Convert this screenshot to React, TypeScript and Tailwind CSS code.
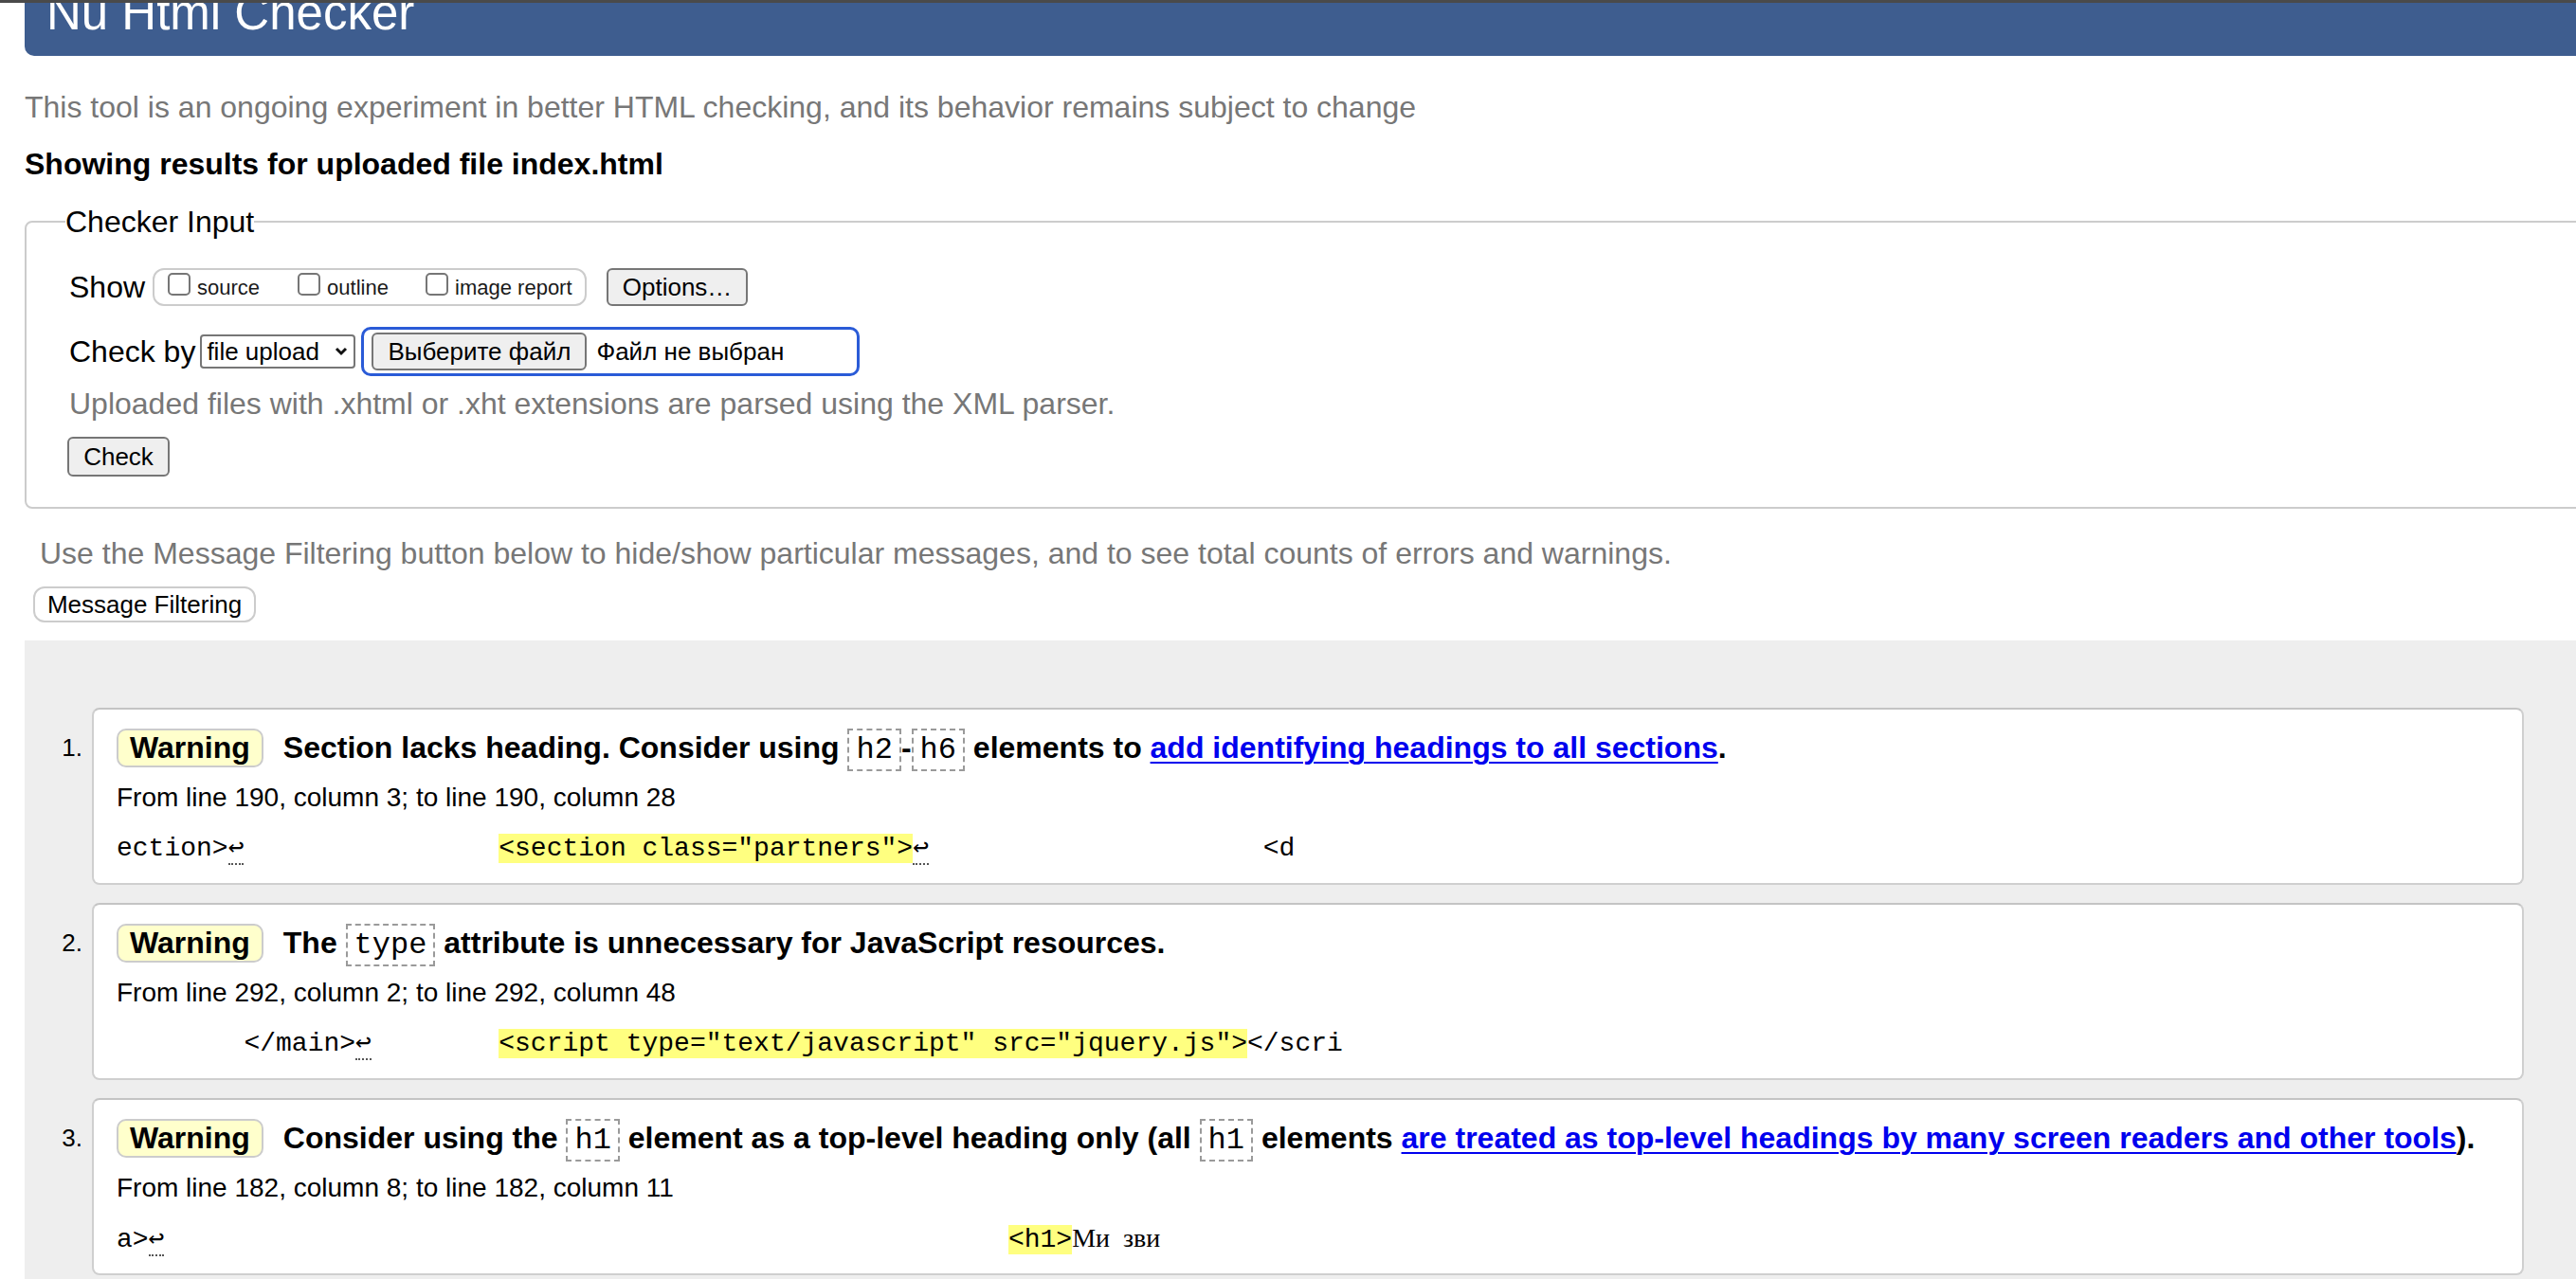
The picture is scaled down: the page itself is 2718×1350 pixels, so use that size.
import React from 'react';

const Code: React.FC<{ children: React.ReactNode }> = ({ children }) => (
  <span className="inline-block border-2 border-dashed border-[#9a9a9a] px-[7px] align-middle font-['Liberation_Mono',monospace] text-[32px] font-normal leading-[41px]">
    {children}
  </span>
);

const Ret: React.FC = () => (
  <span className="inline-block w-[1ch] border-b-2 border-dotted border-[#555] text-center leading-[30px]">↩</span>
);

const Hl: React.FC<{ children: React.ReactNode }> = ({ children }) => (
  <span className="bg-[#ffff80]">{children}</span>
);

interface MessageProps {
  num: number;
  title: React.ReactNode;
  location: string;
  extract: React.ReactNode;
}

const Message: React.FC<MessageProps> = ({ num, title, location, extract }) => (
  <li className="flex">
    <div className="mt-[17px] flex h-[50px] w-[45px] shrink-0 items-center justify-end pr-[10px] text-[26px]">
      {num}.
    </div>
    <div className="flex-1 rounded-[8px] border-2 border-[#cfcfcf] border-t-[#c4c4c4] bg-white pt-[15px] pb-[16px] pl-[24px]">
      <div className="flex h-[50px] items-center">
        <span className="flex h-[41px] items-center rounded-[10px] border-2 border-[#cccccc] bg-[#ffffcc] px-[12px] text-[32px] font-bold leading-none">
          Warning
        </span>
        <p className="ml-[21px] whitespace-nowrap text-[32px] font-bold leading-[50px]">{title}</p>
      </div>
      <div className="mt-[10px] flex h-[36px] items-center text-[28px]">{location}</div>
      <div className="mt-[16px] flex h-[40px] items-center font-['Liberation_Mono',monospace] text-[28px]">
        <span className="whitespace-pre">{extract}</span>
      </div>
    </div>
  </li>
);

const Link: React.FC<{ children: React.ReactNode }> = ({ children }) => (
  <a href="#" className="text-[#0000ee] underline decoration-2 underline-offset-[4px]">
    {children}
  </a>
);

const Checkbox: React.FC<{ label: string; width?: string }> = ({ label, width }) => (
  <span className={`flex items-center ${width ?? ''}`}>
    <span className="-mt-[6px] h-[24px] w-[24px] rounded-[5px] border-2 border-[#767676] bg-white" />
    <span className="ml-[7px] text-[22px] text-[#1a1a1a]">{label}</span>
  </span>
);

const btn = 'flex items-center justify-center rounded-[6px] border-2 border-[#767676] bg-[#efefef] text-[26px] text-black';

export default function App() {
  return (
    <div className="h-[1350px] w-[2718px] overflow-hidden bg-white font-['Liberation_Sans',Arial,sans-serif] text-black">
      <div className="h-[3px] bg-[#4a4a4a]" />
      <header className="ml-[26px] h-[56px] overflow-hidden rounded-bl-[10px] bg-[#3e5d8f] pl-[23px]">
        <h1 className="-mt-[15px] text-[51px] leading-none text-white">Nu Html Checker</h1>
      </header>

      <p className="ml-[26px] mt-[34px] text-[32px] leading-[40px] text-[#777]">
        This tool is an ongoing experiment in better HTML checking, and its behavior remains subject to change
      </p>
      <p className="ml-[26px] mt-[20px] text-[32px] font-bold leading-[40px]">Showing results for uploaded file index.html</p>

      {/* Checker input form */}
      <fieldset className="ml-[26px] mt-[21px] w-[2760px] rounded-[8px] border-2 border-[#cccccc] pl-[41px] pb-[32px]">
        <legend className="text-[32px] leading-[40px]">Checker Input</legend>

        <div className="mt-[25px] flex h-[48px] items-center pl-[4px]">
          <span className="text-[32px]">Show</span>
          <div className="ml-[8px] flex h-[40px] w-[458px] items-center rounded-[12px] border-2 border-[#cccccc] pl-[14px]">
            <Checkbox label="source" width="w-[137px]" />
            <Checkbox label="outline" width="w-[135px]" />
            <Checkbox label="image report" />
          </div>
          <button className={`${btn} ml-[21px] h-[40px] w-[149px]`}>Options…</button>
        </div>

        <div className="mt-[18px] flex h-[52px] items-center pl-[4px]">
          <span className="text-[32px]">Check by</span>
          <div className="ml-[5px] flex h-[36px] w-[164px] items-center justify-between rounded-[4px] border-2 border-[#767676] bg-white pl-[5px] pr-[6px] text-[26px]">
            <span>file upload</span>
            <svg width="14" height="10" viewBox="0 0 14 10" fill="none">
              <polyline points="2,2 7,7 12,2" stroke="#111" strokeWidth="3" />
            </svg>
          </div>
          <div className="ml-[6px] flex h-[52px] w-[526px] items-center rounded-[10px] border-[3px] border-[#2a5bd7] pl-[8px]">
            <button className={`${btn} h-[40px] w-[227px]`}>Выберите файл</button>
            <span className="ml-[10px] text-[26px]">Файл не выбран</span>
          </div>
        </div>

        <p className="mt-[9px] pl-[4px] text-[32px] leading-[40px] text-[#777]">
          Uploaded files with .xhtml or .xht extensions are parsed using the XML parser.
        </p>

        <div className="mt-[15px] pl-[2px]">
          <button className={`${btn} h-[42px] w-[108px]`}>Check</button>
        </div>
      </fieldset>

      <p className="ml-[42px] mt-[27px] text-[32px] leading-[40px] text-[#777]">
        Use the Message Filtering button below to hide/show particular messages, and to see total counts of errors and warnings.
      </p>
      <button className="ml-[35px] mt-[15px] flex h-[38px] w-[235px] items-center justify-center rounded-[12px] border-2 border-[#cccccc] bg-white text-[26px]">
        Message Filtering
      </button>

      {/* Results */}
      <div className="ml-[26px] mt-[19px] h-[700px] bg-[#eeeeee] pl-[26px] pr-[55px] pt-[71px]">
        <ol className="flex flex-col gap-[19px]">
          <Message
            num={1}
            title={
              <>
                Section lacks heading. Consider using <Code>h2</Code>-<Code>h6</Code> elements to{' '}
                <Link>add identifying headings to all sections</Link>.
              </>
            }
            location="From line 190, column 3; to line 190, column 28"
            extract={
              <>
                ection&gt;<Ret />{'                '}
                <Hl>&lt;section class="partners"&gt;</Hl>
                <Ret />
                {'                     '}&lt;d
              </>
            }
          />
          <Message
            num={2}
            title={
              <>
                The <Code>type</Code> attribute is unnecessary for JavaScript resources.
              </>
            }
            location="From line 292, column 2; to line 292, column 48"
            extract={
              <>
                {'        '}&lt;/main&gt;<Ret />{'        '}
                <Hl>&lt;script type="text/javascript" src="jquery.js"&gt;</Hl>&lt;/scri
              </>
            }
          />
          <Message
            num={3}
            title={
              <>
                Consider using the <Code>h1</Code> element as a top-level heading only (all <Code>h1</Code> elements{' '}
                <Link>are treated as top-level headings by many screen readers and other tools</Link>).
              </>
            }
            location="From line 182, column 8; to line 182, column 11"
            extract={
              <>
                a&gt;<Ret />
                {'                                                     '}
                <Hl>&lt;h1&gt;</Hl>
                <span className="font-['Liberation_Serif',serif]">Ми&nbsp;&nbsp;зви</span>
              </>
            }
          />
        </ol>
      </div>
    </div>
  );
}
